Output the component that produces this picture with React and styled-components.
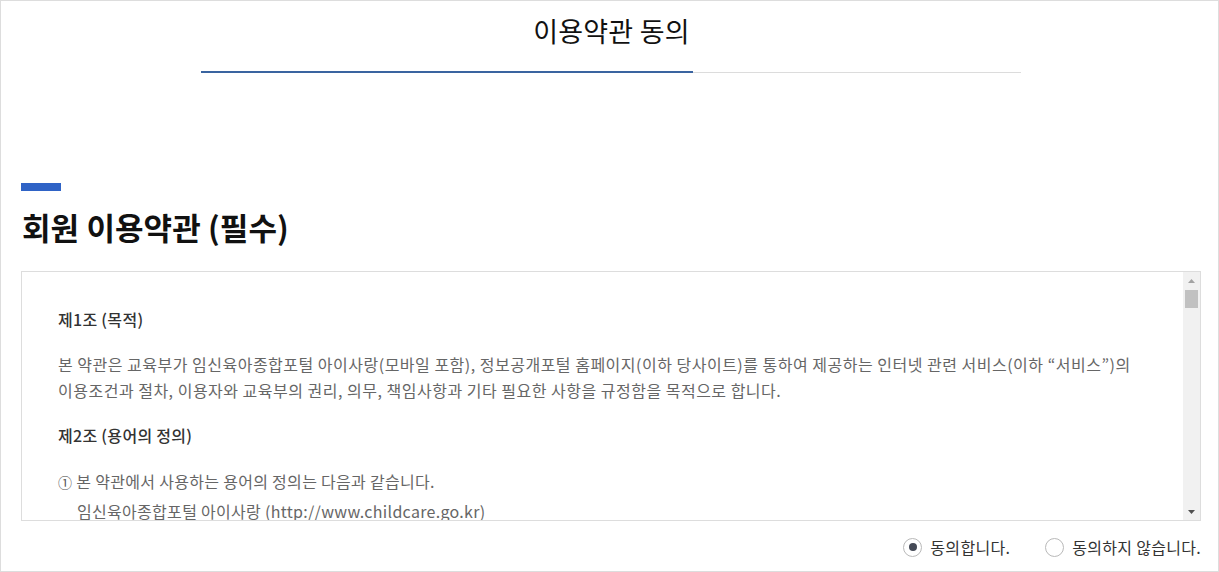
import React, { useState } from "react";
import styled, { createGlobalStyle } from "styled-components";

const FONT = `"Noto Sans CJK KR", "Noto Sans", sans-serif`;

const articles = [
  {
    title: "제1조 (목적)",
    paras: [
      "본 약관은 교육부가 임신육아종합포털 아이사랑(모바일 포함), 정보공개포털 홈페이지(이하 당사이트)를 통하여 제공하는 인터넷 관련 서비스(이하 “서비스”)의 이용조건과 절차, 이용자와 교육부의 권리, 의무, 책임사항과 기타 필요한 사항을 규정함을 목적으로 합니다.",
    ],
  },
  {
    title: "제2조 (용어의 정의)",
    items: [
      { mark: "①", text: "본 약관에서 사용하는 용어의 정의는 다음과 같습니다." },
      { sub: true, text: "임신육아종합포털 아이사랑 (http://www.childcare.go.kr)" },
      { sub: true, text: "어린이집 정보공개포털 (http://info.childcare.go.kr)" },
      { sub: true, text: "1. “이용자”란 당사이트에 접속하여 이 약관에 따라 당사이트가 제공하는 서비스를 받는 회원 및 비회원을 말합니다." },
      { sub: true, text: "2. “회원”이란 당사이트에 개인정보를 제공하여 회원등록을 한 자로서, 서비스를 계속적으로 이용할 수 있는 자를 말합니다." },
      { sub: true, text: "3. “아이디(ID)”란 회원의 식별과 서비스 이용을 위하여 회원이 정하고 당사이트가 승인하는 문자와 숫자의 조합을 말합니다." },
      { mark: "②", text: "본 약관에서 사용하는 용어 중 제1항에서 정하지 아니한 것은 관계 법령 및 서비스별 안내에서 정하는 바에 의합니다." },
    ],
  },
  {
    title: "제3조 (약관의 효력과 변경)",
    items: [
      { mark: "①", text: "본 약관은 당사이트 화면에 게시하거나 기타의 방법으로 이용자에게 공지함으로써 효력이 발생합니다." },
      { mark: "②", text: "교육부는 필요하다고 인정되는 경우 관련 법령을 위배하지 않는 범위에서 본 약관을 변경할 수 있습니다." },
    ],
  },
];

const GlobalStyle = createGlobalStyle`
  html, body {
    margin: 0;
    padding: 0;
    background: #fff;
  }
  body {
    font-family: ${FONT};
    color: #333;
  }
  * {
    box-sizing: border-box;
  }
`;

const Page = styled.div`
  height: 572px;
  border: 1px solid #ddd;
  display: flex;
  flex-direction: column;
  overflow: hidden;
`;

const PageHeader = styled.header`
  display: flex;
  flex-direction: column;
  align-items: center;
  padding-top: 11px;
`;

const PageTitle = styled.h1`
  margin: 0 0 0 4px;
  font-size: 27px;
  line-height: 38px;
  font-weight: 400;
  color: #111;
  letter-spacing: 0.2px;
`;

const StepTrack = styled.div`
  width: 820px;
  height: 2px;
  margin-top: 21px;
  margin-left: 3px;
  display: flex;
  align-items: flex-end;
  background: linear-gradient(to top, #dcdcdc 1px, transparent 1px);
`;

const StepFill = styled.div`
  height: 2px;
  background: #3a64a0;
`;

const Section = styled.section`
  display: flex;
  flex-direction: column;
  padding: 110px 17px 0 20px;
`;

const Accent = styled.span`
  display: block;
  width: 40px;
  height: 8px;
  background: #2f63c6;
`;

const SectionTitle = styled.h2`
  margin: 15px 0 23px 1px;
  font-size: 31px;
  line-height: 42px;
  font-weight: 700;
  color: #111;
  letter-spacing: 0.1px;
`;

const TermsBox = styled.div`
  height: 250px;
  border: 1px solid #ddd;
  display: flex;
  overflow: hidden;
`;

const TermsBody = styled.div`
  flex: 1;
  overflow: hidden;
  padding: 35px 40px 30px 36px;
`;

const ScrollRail = styled.div`
  width: 17px;
  flex: none;
  display: flex;
  flex-direction: column;
  background: #f1f1f1;
`;

const ScrollButton = styled.div`
  height: 17px;
  display: grid;
  place-items: center;
`;

const ScrollTrack = styled.div`
  flex: 1;
  padding: 1px 2px;
`;

const ScrollThumb = styled.div`
  height: 18px;
  background: #c1c1c1;
`;

const Article = styled.article`
  & + & {
    margin-top: 20px;
  }
`;

const ArticleTitle = styled.h3`
  margin: 0 0 20px;
  font-size: 16px;
  line-height: 24px;
  font-weight: 500;
  color: #333;
  letter-spacing: 0.3px;
`;

const Para = styled.p`
  margin: 0;
  font-size: 16px;
  line-height: 26px;
  color: #666;
  letter-spacing: 0.5px;
`;

const ListLine = styled.p`
  margin: 0;
  font-size: 16px;
  line-height: 29px;
  color: #666;
  letter-spacing: 0.3px;
  padding-left: ${(p) => (p.$sub ? "19px" : "0")};
`;

const Mark = styled.span`
  font-size: 14px;
  margin-right: 4px;
  color: #555;
`;

const Choices = styled.div`
  display: flex;
  justify-content: flex-end;
  gap: 35px;
  margin-top: 14px;
  padding-right: 0;
`;

const Choice = styled.label`
  display: flex;
  align-items: center;
  gap: 8px;
  font-size: 16px;
  line-height: 24px;
  color: #333;
  letter-spacing: 0.3px;
  cursor: pointer;
`;

const Radio = styled.input`
  appearance: none;
  margin: 0;
  width: 19px;
  height: 19px;
  border: 1px solid #b9b9b9;
  border-radius: 50%;
  background: #fff;
  display: grid;
  place-items: center;

  &:checked::after {
    content: "";
    width: 8px;
    height: 8px;
    border-radius: 50%;
    background: #454a57;
  }
`;

const Arrow = ({ up, color }) => (
  <svg width="7" height="4" viewBox="0 0 7 4">
    <path d={up ? "M3.5 0L7 4H0z" : "M0 0h7L3.5 4z"} fill={color} />
  </svg>
);

export default function App() {
  const [agree, setAgree] = useState("yes");

  return (
    <>
      <GlobalStyle />
      <Page>
        <PageHeader>
          <PageTitle>이용약관 동의</PageTitle>
          <StepTrack>
            <StepFill style={{ width: "60%" }} />
          </StepTrack>
        </PageHeader>

        <Section>
          <Accent />
          <SectionTitle>회원 이용약관 (필수)</SectionTitle>
          <TermsBox>
            <TermsBody>
              {articles.map((a) => (
                <Article key={a.title}>
                  <ArticleTitle>{a.title}</ArticleTitle>
                  {a.paras &&
                    a.paras.map((t, i) => <Para key={i}>{t}</Para>)}
                  {a.items &&
                    a.items.map((it, i) => (
                      <ListLine key={i} $sub={it.sub}>
                        {it.mark && <Mark>{it.mark}</Mark>}
                        {it.text}
                      </ListLine>
                    ))}
                </Article>
              ))}
            </TermsBody>
            <ScrollRail>
              <ScrollButton>
                <Arrow up color="#a3a3a3" />
              </ScrollButton>
              <ScrollTrack>
                <ScrollThumb />
              </ScrollTrack>
              <ScrollButton>
                <Arrow color="#505050" />
              </ScrollButton>
            </ScrollRail>
          </TermsBox>
          <Choices>
            <Choice>
              <Radio
                type="radio"
                name="agree"
                checked={agree === "yes"}
                onChange={() => setAgree("yes")}
              />
              동의합니다.
            </Choice>
            <Choice>
              <Radio
                type="radio"
                name="agree"
                checked={agree === "no"}
                onChange={() => setAgree("no")}
              />
              동의하지 않습니다.
            </Choice>
          </Choices>
        </Section>
      </Page>
    </>
  );
}
